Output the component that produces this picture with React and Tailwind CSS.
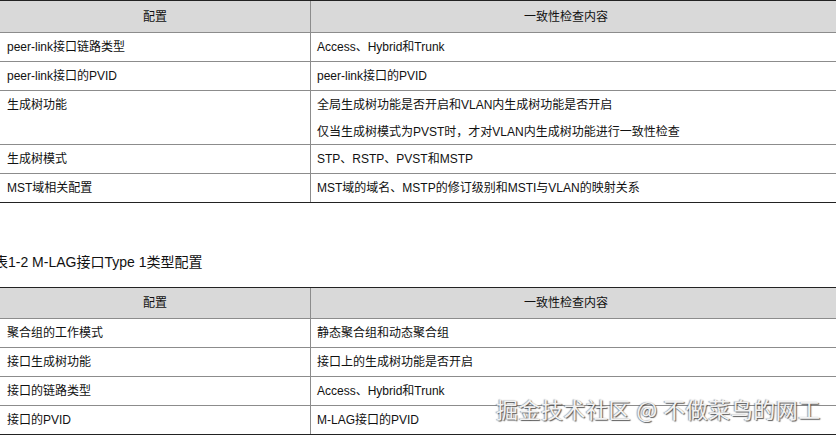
const font = { fontFamily: '"Liberation Sans", Arial, "Noto Sans CJK SC", sans-serif' };

const table1 = [
  { h: "h-[28px]", left: "peer-link接口链路类型", right: ["Access、Hybrid和Trunk"] },
  { h: "h-[28px]", left: "peer-link接口的PVID", right: ["peer-link接口的PVID"] },
  {
    h: "h-[53px]",
    left: "生成树功能",
    right: ["全局生成树功能是否开启和VLAN内生成树功能是否开启", "仅当生成树模式为PVST时，才对VLAN内生成树功能进行一致性检查"],
  },
  { h: "h-[28px]", left: "生成树模式", right: ["STP、RSTP、PVST和MSTP"] },
  { h: "h-[28px]", left: "MST域相关配置", right: ["MST域的域名、MSTP的修订级别和MSTI与VLAN的映射关系"] },
];

const table2 = [
  { h: "h-[28px]", left: "聚合组的工作模式", right: ["静态聚合组和动态聚合组"] },
  { h: "h-[28px]", left: "接口生成树功能", right: ["接口上的生成树功能是否开启"] },
  { h: "h-[28px]", left: "接口的链路类型", right: ["Access、Hybrid和Trunk"] },
  { h: "h-[28px]", left: "接口的PVID", right: ["M-LAG接口的PVID"] },
];

const ConfigTable = ({ rows, headH }) => (
  <div className="w-full border-t border-b border-[#222] text-[12px] text-[#111]">
    <div className={`grid grid-cols-[310px_1fr] bg-[#d9d9d9] ${headH}`}>
      <div className="flex items-center justify-center">配置</div>
      <div className="flex items-center justify-center border-l border-[#8c8c8c] pr-[15px]">一致性检查内容</div>
    </div>
    {rows.map((row, i) => (
      <div key={i} className={`grid grid-cols-[310px_1fr] border-t border-[#8c8c8c] box-content ${row.h}`}>
        <div className="px-[7px] pt-[5px] leading-[18px]">{row.left}</div>
        <div className="flex flex-col gap-[9px] border-l border-[#8c8c8c] pl-[6px] pt-[5px] leading-[18px]">
          {row.right.map((t, j) => (
            <div key={j}>{t}</div>
          ))}
        </div>
      </div>
    ))}
  </div>
);

export default function App() {
  return (
    <div className="relative w-[836px] h-[436px] overflow-hidden bg-white" style={font}>
      <ConfigTable rows={table1} headH="h-[31px]" />
      <div className="ml-[-6px] mt-[49px] mb-[15px] text-[14px] leading-[20px] text-[#111]">表1-2 M-LAG接口Type 1类型配置</div>
      <ConfigTable rows={table2} headH="h-[30px]" />
      <div className="absolute left-[496px] top-[395px] text-[22px] leading-[26px] tracking-[0.5px] text-[#f2f2f2] [text-shadow:1px_1px_1px_rgba(50,50,50,0.8),-1px_0_1px_rgba(80,80,80,0.55)]" style={{ fontFamily: '"Noto Sans CJK SC", sans-serif' }}>
        掘金技术社区 @ 不做菜鸟的网工
      </div>
    </div>
  );
}
